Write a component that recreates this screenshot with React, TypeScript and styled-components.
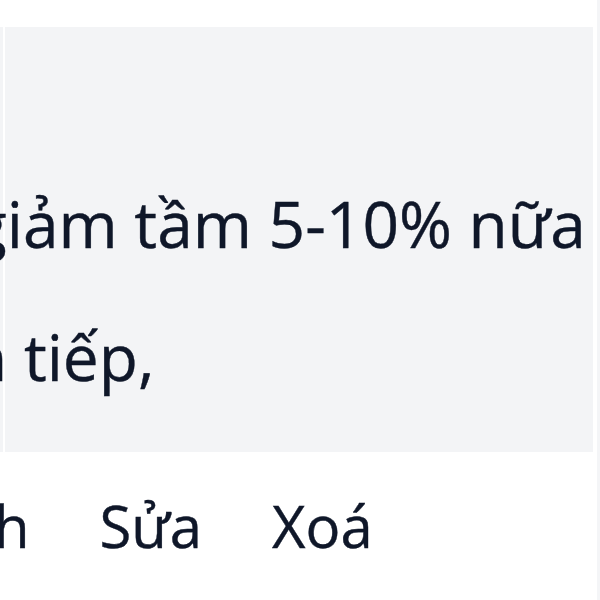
import React from 'react';
import styled, { createGlobalStyle } from 'styled-components';

const GlobalStyle = createGlobalStyle`
  html, body {
    margin: 0;
    padding: 0;
    background: #ffffff;
  }
  body {
    font-family: 'Open Sans', 'Noto Sans', 'Liberation Sans', sans-serif;
    color: #111827;
    overflow: hidden;
  }
`;

const Page = styled.div`
  width: 600px;
  height: 600px;
  box-sizing: border-box;
  padding-top: 27px;
  border-right: 3px solid #f4f5f7;
  overflow: hidden;
`;

const CommentBody = styled.div`
  width: 593px;
  height: 425px;
  box-sizing: border-box;
  padding: 130px 0 0 0;
  /* thin white seam near the left edge of the bubble */
  background: linear-gradient(
    to right,
    #f3f4f6 3px,
    #ffffff 3px,
    #ffffff 5px,
    #f3f4f6 5px
  );
`;

const Line = styled.p<{ $shift: number }>`
  margin: 0 0 0 ${(p) => p.$shift}px;
  font-size: 64px;
  line-height: 133px;
  white-space: nowrap;
  color: #0f1729;
  -webkit-text-stroke: 0.4px #0f1729;
`;

const Actions = styled.div`
  display: flex;
  align-items: baseline;
  gap: 70px;
  margin: 34px 0 0 -116px;
  white-space: nowrap;
`;

const ActionLink = styled.span`
  font-size: 58px;
  line-height: 80px;
  color: #0f1729;
  -webkit-text-stroke: 0.4px #0f1729;
  cursor: pointer;
`;

function App() {
  return (
    <>
      <GlobalStyle />
      <Page>
        <CommentBody>
          <Line $shift={-28}>giảm tầm 5-10% nữa</Line>
          <Line $shift={-32}>n tiếp,</Line>
        </CommentBody>
        <Actions>
          <ActionLink>Thích</ActionLink>
          <ActionLink>Sửa</ActionLink>
          <ActionLink>Xoá</ActionLink>
        </Actions>
      </Page>
    </>
  );
}

export default App;
